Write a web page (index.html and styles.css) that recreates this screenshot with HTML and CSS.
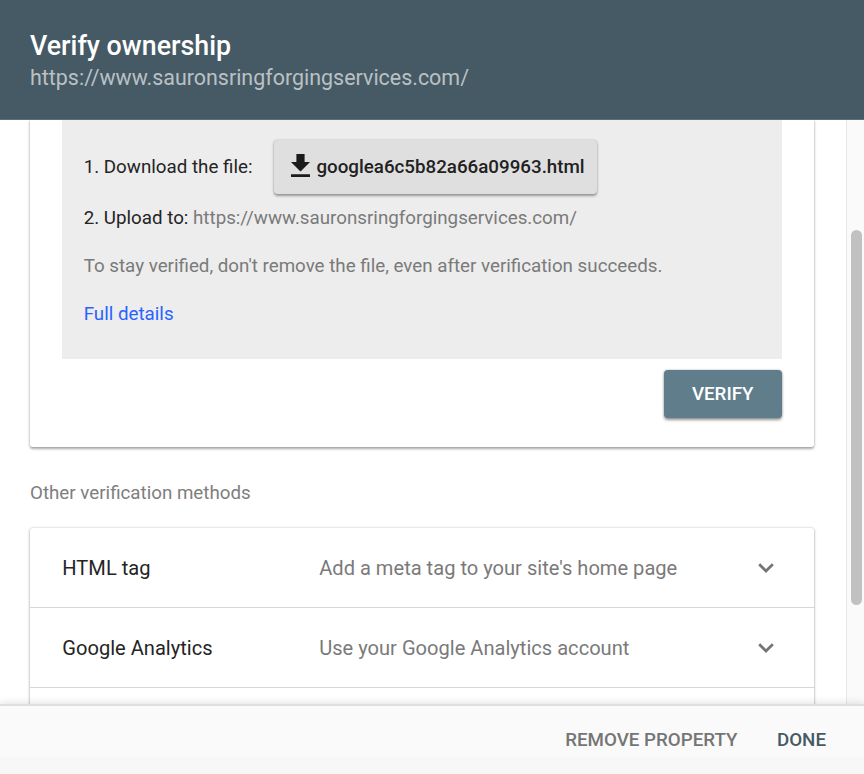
FILE: index.html
```html
<!DOCTYPE html>
<html lang="en">
<head>
<meta charset="utf-8">
<title>Verify ownership</title>
<link rel="stylesheet" href="styles.css">
</head>
<body>
<div class="dialog">
  <header class="header">
    <h1 class="title">Verify ownership</h1>
    <p class="subtitle">https://www.sauronsringforgingservices.com/</p>
  </header>
  <div class="body">
    <main class="content">
      <section class="card recommended">
        <div class="panel">
          <div class="step step-download">
            <span>1. Download the file:</span>
            <button class="download" type="button">
              <svg class="download-icon" viewBox="0 0 19 23" aria-hidden="true"><path d="M19 8.1h-5.4V0H5.4v8.1H0l9.5 9.5zM0 20.3V23h19v-2.7z"/></svg>
              <span>googlea6c5b82a66a09963.html</span>
            </button>
          </div>
          <p class="step">2. Upload to: <span class="muted">https://www.sauronsringforgingservices.com/</span></p>
          <p class="step muted">To stay verified, don't remove the file, even after verification succeeds.</p>
          <p class="step"><a class="link">Full details</a></p>
        </div>
        <button class="verify" type="button">VERIFY</button>
      </section>
      <h2 class="section-title">Other verification methods</h2>
      <section class="card methods">
        <div class="method">
          <span class="method-name">HTML tag</span>
          <span class="method-text">Add a meta tag to your site's home page</span>
          <svg class="chevron" viewBox="0 0 16 10" aria-hidden="true"><path d="M1.2 1.2L8 8l6.8-6.8"/></svg>
        </div>
        <div class="method">
          <span class="method-name">Google Analytics</span>
          <span class="method-text">Use your Google Analytics account</span>
          <svg class="chevron" viewBox="0 0 16 10" aria-hidden="true"><path d="M1.2 1.2L8 8l6.8-6.8"/></svg>
        </div>
        <div class="method"></div>
      </section>
    </main>
    <div class="scrollbar"><div class="thumb"></div></div>
  </div>
  <footer class="footer">
    <button class="action" type="button">REMOVE PROPERTY</button>
    <button class="action action-primary" type="button">DONE</button>
  </footer>
</div>
</body>
</html>
```
FILE: styles.css
```css
* { box-sizing: border-box; }

body {
  margin: 0;
  font-family: Roboto, sans-serif;
  font-size: 18.76px;
  color: #242424;
  background: #fff;
}

h1, h2, p { margin: 0; font-weight: 400; }

button {
  border: 0;
  padding: 0;
  font: inherit;
  font-weight: 500;
  background: none;
}

.dialog {
  display: flex;
  flex-direction: column;
  height: 774px;
  overflow: hidden;
}

.header {
  flex: none;
  height: 120px;
  padding: 30px 30px 0;
  background: #455a64;
  border-bottom: 1px solid #5b7079;
}
.title {
  font-size: 26.8px;
  font-weight: 500;
  line-height: 32px;
  color: #fff;
}
.subtitle {
  font-size: 21.44px;
  line-height: 32px;
  color: rgba(255, 255, 255, .64);
}

.body {
  flex: 1;
  display: flex;
  min-height: 0;
  overflow: hidden;
}
.content {
  flex: 1;
  padding: 0 32px 0 30px;
}

.card {
  background: #fff;
  border-radius: 2.7px;
  box-shadow: 0 1.3px 2.7px rgba(0, 0, 0, .32), 0 0 2.7px rgba(0, 0, 0, .16);
}
.recommended {
  display: flex;
  flex-direction: column;
  height: 327.3px;
  padding: 0 32.3px;
  border-radius: 0 0 2.7px 2.7px;
  clip-path: inset(0 -8px -8px);
}
.panel {
  height: 239.4px;
  padding: 19.6px 21.4px 0;
  background: #ededed;
}
.step { line-height: 48px; white-space: nowrap; }
.step-download {
  display: flex;
  align-items: center;
  gap: 21.6px;
  height: 54px;
}
.muted { color: #7a7a7a; }
.link { color: #2962ff; }

.download {
  display: flex;
  align-items: center;
  gap: 6.4px;
  height: 54px;
  width: 322.5px;
  padding-left: 17px;
  border-radius: 4px;
  color: #212121;
  background: #dfdfdf;
  box-shadow: 0 1.3px 2.7px rgba(0, 0, 0, .36), 0 0 2px rgba(0, 0, 0, .12);
}
.download-icon {
  width: 19px;
  height: 23px;
  margin-bottom: 2px;
  fill: #1b1b1b;
}

.verify {
  align-self: flex-end;
  width: 118px;
  height: 48px;
  margin-top: 11px;
  padding-bottom: 1px;
  border-radius: 4px;
  color: #fff;
  background: #607d8b;
  box-shadow: 0 1.6px 3px rgba(0, 0, 0, .42), 0 0 2px rgba(0, 0, 0, .14);
}

.section-title {
  font-size: 18.76px;
  line-height: 80px;
  margin-top: 6px;
  height: 74.4px;
  color: #7e7e7e;
}

.method {
  display: flex;
  align-items: center;
  height: 80.2px;
  padding: 1px 40.5px 0 32.3px;
  font-size: 20.1px;
  border-bottom: 1.3px solid #d6d6d6;
}
.method-name { width: 256.9px; }
.method-text { flex: 1; color: #7a7a7a; }
.chevron {
  width: 16px;
  height: 10px;
  fill: none;
  stroke: #757575;
  stroke-width: 2.7;
}

.scrollbar {
  width: 18px;
  padding: 110px 2px 0 4px;
  background: #fafafa;
  border-left: 1px solid #e8e8e8;
}
.thumb {
  height: 375px;
  border-radius: 6px;
  background: #c1c1c1;
}

.footer {
  flex: none;
  display: flex;
  justify-content: flex-end;
  gap: 39.5px;
  height: 70px;
  padding: 0 38px 0 0;
  position: relative;
  background: linear-gradient(#fafafa 51px, #f7f7f7 51px);
  border-top: 2px solid #dfdfdf;
  box-shadow: 0 -1px 8px rgba(0, 0, 0, .12);
}
.action { color: #757575; }
.action-primary { color: #455a64; }
```
